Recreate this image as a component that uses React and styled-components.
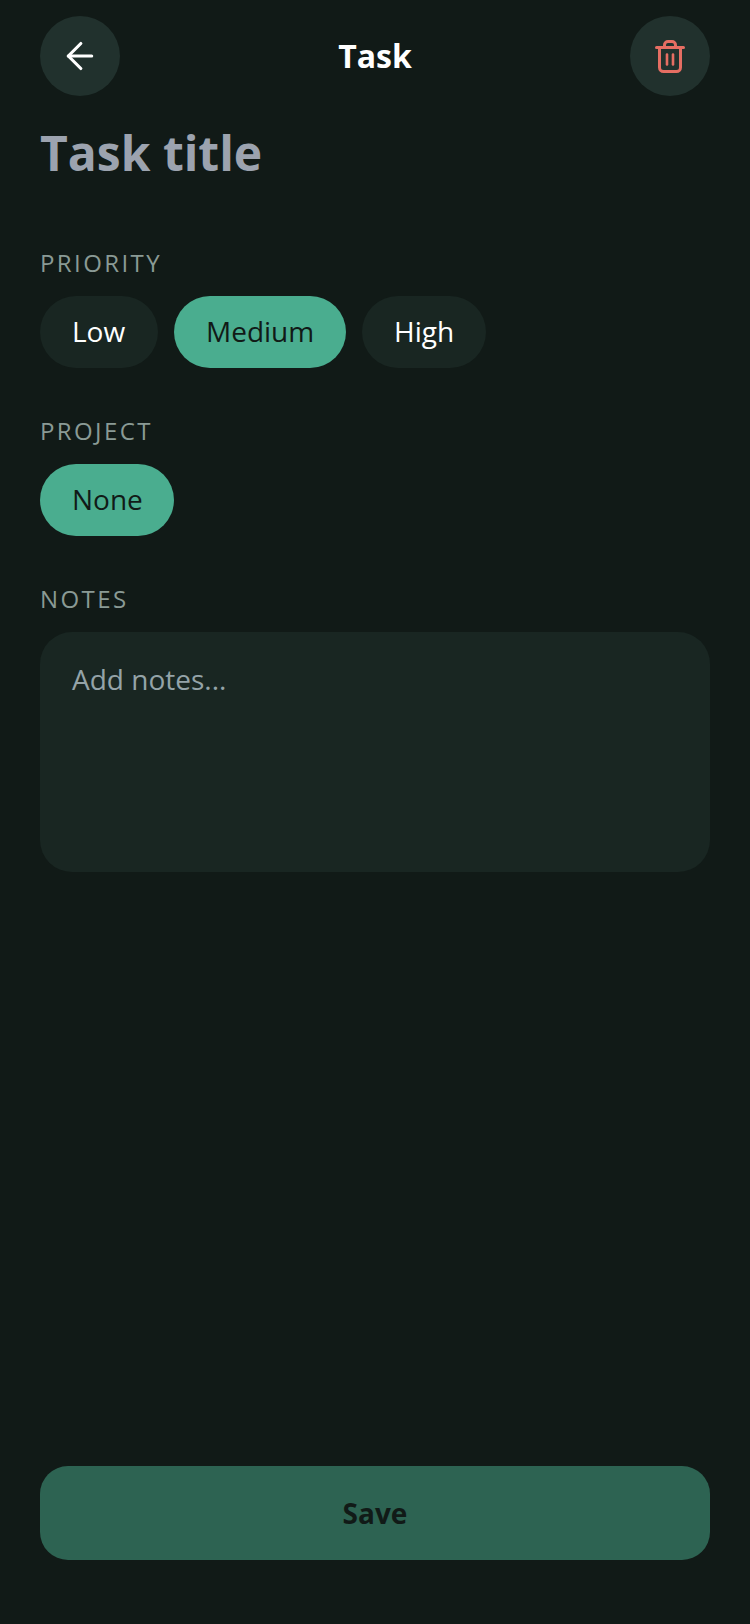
import React from 'react'
import styled, { createGlobalStyle } from 'styled-components'

const GlobalStyle = createGlobalStyle`
  html, body {
    margin: 0;
    padding: 0;
    background: #111a17;
  }
  * {
    box-sizing: border-box;
  }
`

const Screen = styled.div`
  width: 750px;
  height: 1624px;
  padding: 16px 40px 0;
  display: flex;
  flex-direction: column;
  background: #111a17;
  font-family: "Open Sans", sans-serif;
  color: #fff;
`

const Header = styled.div`
  display: flex;
  align-items: center;
  justify-content: space-between;
  height: 80px;
`

const RoundButton = styled.div`
  width: 80px;
  height: 80px;
  border-radius: 50%;
  display: flex;
  align-items: center;
  justify-content: center;
  background: #21312d;
`

const HeaderTitle = styled.div`
  font-size: 32px;
  font-weight: 700;
  padding-bottom: 2px;
  color: #fff;
`

const TitleText = styled.div`
  margin-top: 25px;
  font-size: 48px;
  line-height: 64px;
  font-weight: 700;
  color: #9ca3af;
`

const Section = styled.div`
  margin-top: ${p => p.$top || 47}px;
`

const Label = styled.div`
  font-size: 24px;
  line-height: 32px;
  letter-spacing: 2.4px;
  color: #8a9a95;
`

const ChipRow = styled.div`
  display: flex;
  gap: 16px;
  margin-top: 17px;
`

const Chip = styled.div`
  width: ${p => p.$width}px;
  height: 72px;
  padding: 0 0 2px 32px;
  border-radius: 36px;
  display: flex;
  align-items: center;
  font-size: 28px;
  background: ${p => (p.$active ? '#4aad8f' : '#192622')};
  color: ${p => (p.$active ? '#111a17' : '#fff')};
`

const Notes = styled.div`
  margin-top: 17px;
  height: 240px;
  padding: 27px 32px;
  border-radius: 32px;
  background: #192622;
  font-size: 28px;
  line-height: 40px;
  color: #94a3a8;
`

const SaveButton = styled.div`
  margin-top: auto;
  margin-bottom: 64px;
  height: 94px;
  border-radius: 28px;
  display: flex;
  align-items: center;
  justify-content: center;
  background: #2d6352;
  color: #111a17;
  font-size: 28px;
  font-weight: 700;
`

const BackIcon = () => (
  <svg width="40" height="40" viewBox="0 0 24 24" fill="none" stroke="#fff" strokeWidth="1.9" strokeLinecap="round" strokeLinejoin="round">
    <path d="M19 12H5" />
    <path d="M12.5 19.5 5 12l7.5-7.5" />
  </svg>
)

const TrashIcon = () => (
  <svg width="30" height="33" viewBox="0 0 30 33" fill="none" stroke="#e66e63" strokeWidth="3" strokeLinecap="round" strokeLinejoin="round">
    <path d="M1.5 7.5h27" />
    <path d="M4.5 7.5v20a4 4 0 0 0 4 4h13a4 4 0 0 0 4-4v-20" />
    <path d="M9.5 7.5V5A3.5 3.5 0 0 1 13 1.5h4A3.5 3.5 0 0 1 20.5 5v2.5" />
    <path d="M12 14.5v10" strokeWidth="2.6" />
    <path d="M18 14.5v10" strokeWidth="2.6" />
  </svg>
)

export default function App() {
  return (
    <Screen>
      <GlobalStyle />
      <Header>
        <RoundButton><BackIcon /></RoundButton>
        <HeaderTitle>Task</HeaderTitle>
        <RoundButton><TrashIcon /></RoundButton>
      </Header>
      <TitleText>Task title</TitleText>
      <Section $top={62}>
        <Label>PRIORITY</Label>
        <ChipRow>
          <Chip $width={118}>Low</Chip>
          <Chip $width={172} $active>Medium</Chip>
          <Chip $width={124}>High</Chip>
        </ChipRow>
      </Section>
      <Section>
        <Label>PROJECT</Label>
        <ChipRow>
          <Chip $width={134} $active>None</Chip>
        </ChipRow>
      </Section>
      <Section>
        <Label>NOTES</Label>
        <Notes>Add notes...</Notes>
      </Section>
      <SaveButton>Save</SaveButton>
    </Screen>
  )
}
